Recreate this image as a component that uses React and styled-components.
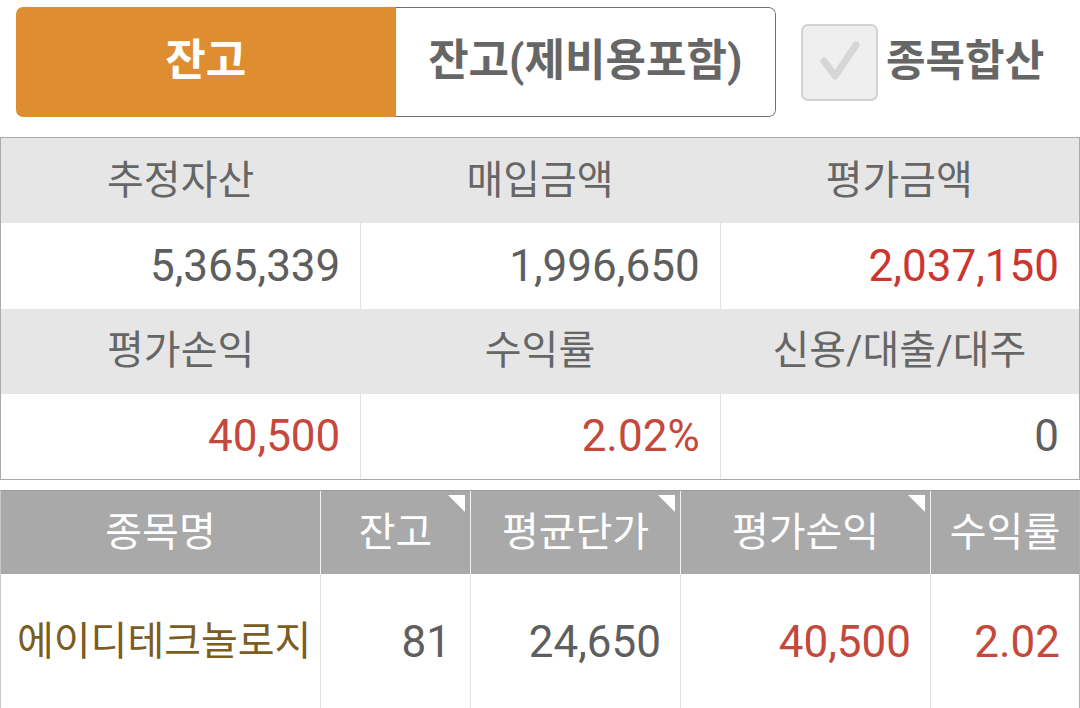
import React from "react";
import styled, { createGlobalStyle } from "styled-components";

const GlobalStyle = createGlobalStyle`
  html, body {
    margin: 0;
    padding: 0;
    background: #fff;
    font-family: Roboto, "Noto Sans CJK KR", sans-serif;
  }
`;

const summary = [
  [
    { label: "추정자산", value: "5,365,339" },
    { label: "매입금액", value: "1,996,650" },
    { label: "평가금액", value: "2,037,150", color: "#cc3530" },
  ],
  [
    { label: "평가손익", value: "40,500", color: "#c4483b" },
    { label: "수익률", value: "2.02%", color: "#c4483b" },
    { label: "신용/대출/대주", value: "0" },
  ],
];

const columns = [
  { label: "종목명" },
  { label: "잔고", mark: true },
  { label: "평균단가", mark: true },
  { label: "평가손익", mark: true },
  { label: "수익률" },
];

const holdings = [
  {
    name: "에이디테크놀로지",
    qty: "81",
    avg: "24,650",
    pl: "40,500",
    rate: "2.02",
  },
];

const App = () => {
  return (
    <>
      <GlobalStyle />
      <Page>
        <TopBar>
          <Segment>
            <Tab $active>잔고</Tab>
            <Tab>잔고(제비용포함)</Tab>
          </Segment>
          <CheckBox>
            <svg width="77" height="77" viewBox="0 0 77 77">
              <polyline
                points="23,37 34,52 55,21"
                fill="none"
                stroke="#d6d6d6"
                strokeWidth="7"
                strokeLinecap="round"
                strokeLinejoin="round"
              />
            </svg>
          </CheckBox>
          <CheckLabel>종목합산</CheckLabel>
        </TopBar>

        <Summary>
          {summary.map((row, i) => (
            <React.Fragment key={i}>
              {row.map((c) => (
                <HeadCell key={"h" + c.label}>{c.label}</HeadCell>
              ))}
              {row.map((c, j) => (
                <ValueCell key={"v" + c.label} $first={j === 0} $color={c.color}>
                  {c.value}
                </ValueCell>
              ))}
            </React.Fragment>
          ))}
        </Summary>

        <Holdings>
          {columns.map((c, i) => (
            <ColHead key={c.label} $first={i === 0}>
              {c.label}
              {c.mark && <Corner />}
            </ColHead>
          ))}
          {holdings.map((h) => (
            <React.Fragment key={h.name}>
              <NameCell>{h.name}</NameCell>
              <NumCell>{h.qty}</NumCell>
              <NumCell>{h.avg}</NumCell>
              <NumCell $color="#c4483b">{h.pl}</NumCell>
              <NumCell $color="#c4483b">{h.rate}</NumCell>
            </React.Fragment>
          ))}
        </Holdings>
      </Page>
    </>
  );
};

const Page = styled.div`
  width: 1080px;
  display: flex;
  flex-direction: column;
`;

const TopBar = styled.div`
  display: flex;
  align-items: center;
  margin-top: 7px;
  padding-left: 16px;
`;

const Segment = styled.div`
  display: flex;
  width: 760px;
  height: 110px;
  border-radius: 7px;
  overflow: hidden;
`;

const Tab = styled.div`
  flex: 1;
  display: flex;
  align-items: center;
  justify-content: center;
  box-sizing: border-box;
  font-size: 44px;
  font-weight: 700;
  line-height: 1;
  padding-bottom: 2px;
  background: ${(p) => (p.$active ? "#df8d31" : "#fff")};
  color: ${(p) => (p.$active ? "#fff" : "#666")};
  border: ${(p) => (p.$active ? "none" : "1px solid #6e6e6e")};
  border-left: none;
  border-radius: ${(p) => (p.$active ? "0" : "0 7px 7px 0")};
`;

const CheckBox = styled.div`
  width: 77px;
  height: 77px;
  margin-left: 25px;
  box-sizing: border-box;
  border: 2px solid #d2d2d2;
  border-radius: 7px;
  background: #efefef;
  display: flex;
  align-items: center;
  justify-content: center;
  svg {
    margin: -2px;
  }
`;

const CheckLabel = styled.div`
  margin-left: 8px;
  font-size: 43px;
  font-weight: 700;
  color: #666;
  line-height: 1;
  padding-bottom: 2px;
`;

const Summary = styled.div`
  margin-top: 20px;
  display: grid;
  grid-template-columns: repeat(3, 1fr);
  grid-auto-rows: 85.25px;
  border: 1px solid #aaa;
  box-sizing: border-box;
  width: 1080px;
`;

const HeadCell = styled.div`
  background: #e6e6e6;
  color: #666;
  font-size: 40px;
  display: flex;
  align-items: center;
  justify-content: center;
  line-height: 1;
`;

const ValueCell = styled.div`
  background: #fff;
  color: ${(p) => p.$color || "#5e5e5e"};
  font-size: 44px;
  display: flex;
  align-items: center;
  justify-content: flex-end;
  padding-right: 20px;
  line-height: 1;
  border-left: ${(p) => (p.$first ? "none" : "1px solid #e2e2e2")};
`;

const Holdings = styled.div`
  margin-top: 10px;
  display: grid;
  grid-template-columns: 319px 150px 210px 250px 1fr;
  grid-template-rows: 83px 136px;
  border-top: 1px solid #9c9c9c;
  border-left: 1px solid #c8c8c8;
  border-right: 1px solid #b0b0b0;
  box-sizing: border-box;
  width: 1080px;
`;

const ColHead = styled.div`
  position: relative;
  background: #a9a9a9;
  color: #fff;
  font-size: 40px;
  display: flex;
  align-items: center;
  justify-content: center;
  line-height: 1;
  border-left: ${(p) => (p.$first ? "none" : "1px solid #f2f2f2")};
`;

const Corner = styled.span`
  position: absolute;
  top: 4px;
  right: 5px;
  width: 0;
  height: 0;
  border-top: 17px solid #fff;
  border-left: 17px solid transparent;
`;

const NameCell = styled.div`
  display: flex;
  align-items: center;
  padding-left: 16px;
  color: #7b5d1f;
  font-size: 40px;
  line-height: 1;
`;

const NumCell = styled.div`
  display: flex;
  align-items: center;
  justify-content: flex-end;
  padding-right: 19px;
  color: ${(p) => p.$color || "#5e5e5e"};
  font-size: 44px;
  line-height: 1;
  border-left: 1px solid #e2e2e2;
`;

export default App;
